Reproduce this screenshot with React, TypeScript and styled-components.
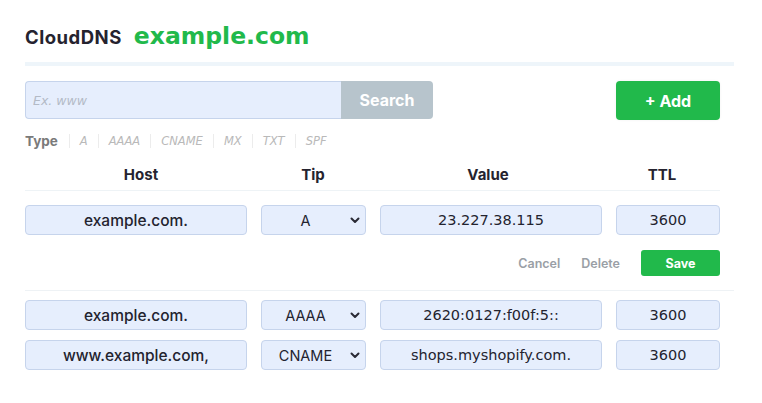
import React from "react";
import styled, { createGlobalStyle } from "styled-components";

const Global = createGlobalStyle`
  html, body { margin: 0; padding: 0; background: #ffffff; }
  body { font-family: "Inter", "Noto Sans", sans-serif; color: #23232f; }
  * { box-sizing: border-box; }
`;

const UI = `"Inter", "Lato", sans-serif`;
const PLAIN = `"DejaVu Sans", "Verdana", sans-serif`;
const GREEN = "#21b94b";
const FIELD_BG = "#e6eefd";
const FIELD_BORDER = "#c6d4ec";
const COLS = "222px 105px 222px 104px";
const HEAD_COLS = "232px 112px 238px 110px";

const Page = styled.div`
  padding: 22px 0 0 25px;
  width: 735px;
`;

const TitleBar = styled.div`
  display: flex;
  align-items: baseline;
  gap: 12px;
  height: 40px;
`;

const Brand = styled.h1`
  margin: 0;
  font-family: ${UI};
  font-weight: 700;
  font-size: 18.5px;
  letter-spacing: 0.5px;
  color: #25232f;
`;

const Domain = styled.span`
  font-family: ${PLAIN};
  font-weight: 700;
  font-size: 23.5px;
  color: ${GREEN};
`;

const Rule = styled.div`
  height: 4px;
  background: #eef5fa;
  width: 709px;
`;

const Content = styled.div`
  width: 695px;
`;

const Toolbar = styled.div`
  display: flex;
  justify-content: space-between;
  align-items: flex-start;
  margin-top: 15px;
`;

const SearchGroup = styled.div`
  display: flex;
  height: 38px;
`;

const SearchInput = styled.input`
  width: 316px;
  height: 38px;
  border: 1px solid ${FIELD_BORDER};
  border-right: none;
  border-radius: 4px 0 0 4px;
  background: ${FIELD_BG};
  padding: 0 7px;
  font-family: ${PLAIN};
  font-size: 12.5px;
  outline: none;
  &::placeholder {
    color: #b3bac6;
    font-style: italic;
  }
`;

const SearchButton = styled.button`
  width: 92px;
  height: 38px;
  border: none;
  border-radius: 0 4px 4px 0;
  background: #b7c4cc;
  color: #ffffff;
  font-family: ${UI};
  font-weight: 700;
  font-size: 16px;
  cursor: pointer;
`;

const AddButton = styled.button`
  width: 104px;
  height: 39px;
  border: none;
  border-radius: 4px;
  background: ${GREEN};
  color: #ffffff;
  font-family: ${UI};
  font-weight: 700;
  font-size: 16px;
  box-shadow: 0 0 3px rgba(0, 0, 0, 0.06);
  cursor: pointer;
`;

const TypeRow = styled.div`
  display: flex;
  align-items: center;
  margin-top: 13px;
  height: 16px;
`;

const TypeLabel = styled.span`
  font-family: ${UI};
  font-weight: 700;
  font-size: 13.5px;
  color: #7a7a7a;
  padding-right: 11px;
`;

const TypeItem = styled.span`
  font-family: ${PLAIN};
  font-style: italic;
  font-size: 11.5px;
  color: #b9b9b9;
  padding: 0 10px;
  border-left: 1px solid #ececec;
  line-height: 14px;
`;

const Grid = styled.div`
  display: grid;
  grid-template-columns: ${COLS};
  column-gap: 14px;
`;

const HeadRow = styled.div`
  display: grid;
  grid-template-columns: ${HEAD_COLS};
  margin-top: 17px;
  padding-bottom: 6px;
  border-bottom: 1px solid #eef3f6;
`;

const HeadCell = styled.div`
  text-align: center;
  font-family: ${UI};
  font-weight: 700;
  font-size: 15px;
  color: #25232f;
  line-height: 18px;
`;

const RecordRow = styled(Grid)<{ $top: number }>`
  margin-top: ${(p) => p.$top}px;
`;

const Field = styled.input<{ $plain?: boolean }>`
  width: 100%;
  height: 30px;
  border: 1px solid ${FIELD_BORDER};
  border-radius: 4px;
  background: ${FIELD_BG};
  text-align: center;
  font-family: ${(p) => (p.$plain ? PLAIN : UI)};
  font-weight: ${(p) => (p.$plain ? 400 : 500)};
  font-size: ${(p) => (p.$plain ? "14.5px" : "15.5px")};
  color: #23232f;
  outline: none;
`;

const SelectWrap = styled.div`
  position: relative;
  height: 30px;
`;

const Select = styled.select`
  appearance: none;
  -webkit-appearance: none;
  width: 100%;
  height: 30px;
  border: 1px solid ${FIELD_BORDER};
  border-radius: 4px;
  background: ${FIELD_BG};
  padding: 0 16px 0 0;
  text-align: center;
  text-align-last: center;
  font-family: ${UI};
  font-weight: 400;
  font-size: 14.5px;
  color: #23232f;
  outline: none;
`;

const Chevron = styled.svg`
  position: absolute;
  right: 6px;
  top: 12px;
  pointer-events: none;
`;

const Actions = styled.div`
  display: flex;
  justify-content: flex-end;
  align-items: center;
  margin-top: 15px;
  height: 26px;
`;

const LinkButton = styled.button`
  border: none;
  background: none;
  font-family: ${UI};
  font-weight: 600;
  font-size: 12.5px;
  color: #9a9fa6;
  padding: 0;
  margin-right: 21px;
  cursor: pointer;
`;

const SaveButton = styled.button`
  width: 79px;
  height: 26px;
  border: none;
  border-radius: 3px;
  background: ${GREEN};
  color: #ffffff;
  font-family: ${UI};
  font-weight: 700;
  font-size: 12.5px;
  cursor: pointer;
`;

const RowDivider = styled.div`
  margin-top: 14px;
  height: 1px;
  width: 709px;
  background: #eef2f5;
`;

type Rec = { host: string; type: string; value: string; ttl: string };

const TYPES = ["A", "AAAA", "CNAME", "MX", "TXT", "SPF"];

const TypeSelect: React.FC<{ value: string }> = ({ value }) => (
  <SelectWrap>
    <Select defaultValue={value}>
      {TYPES.map((t) => (
        <option key={t}>{t}</option>
      ))}
    </Select>
    <Chevron width="10" height="7" viewBox="0 0 10 7">
      <path d="M1.5 1.5 L5 5 L8.5 1.5" fill="none" stroke="#2a2a35" strokeWidth="2" strokeLinecap="round" strokeLinejoin="round" />
    </Chevron>
  </SelectWrap>
);

const Record: React.FC<{ rec: Rec; top: number }> = ({ rec, top }) => (
  <RecordRow $top={top}>
    <Field defaultValue={rec.host} />
    <TypeSelect value={rec.type} />
    <Field $plain defaultValue={rec.value} />
    <Field $plain defaultValue={rec.ttl} />
  </RecordRow>
);

export default function App() {
  return (
    <>
      <Global />
      <Page>
        <TitleBar>
          <Brand>CloudDNS</Brand>
          <Domain>example.com</Domain>
        </TitleBar>
        <Rule />
        <Content>
          <Toolbar>
            <SearchGroup>
              <SearchInput placeholder="Ex. www" />
              <SearchButton>Search</SearchButton>
            </SearchGroup>
            <AddButton>+ Add</AddButton>
          </Toolbar>
          <TypeRow>
            <TypeLabel>Type</TypeLabel>
            {TYPES.map((t) => (
              <TypeItem key={t}>{t}</TypeItem>
            ))}
          </TypeRow>
          <HeadRow>
            <HeadCell>Host</HeadCell>
            <HeadCell>Tip</HeadCell>
            <HeadCell>Value</HeadCell>
            <HeadCell>TTL</HeadCell>
          </HeadRow>
          <Record top={14} rec={{ host: "example.com.", type: "A", value: "23.227.38.115", ttl: "3600" }} />
          <Actions>
            <LinkButton>Cancel</LinkButton>
            <LinkButton>Delete</LinkButton>
            <SaveButton>Save</SaveButton>
          </Actions>
        </Content>
        <RowDivider />
        <Content>
          <Record top={9} rec={{ host: "example.com.", type: "AAAA", value: "2620:0127:f00f:5::", ttl: "3600" }} />
          <Record top={10} rec={{ host: "www.example.com,", type: "CNAME", value: "shops.myshopify.com.", ttl: "3600" }} />
        </Content>
      </Page>
    </>
  );
}
